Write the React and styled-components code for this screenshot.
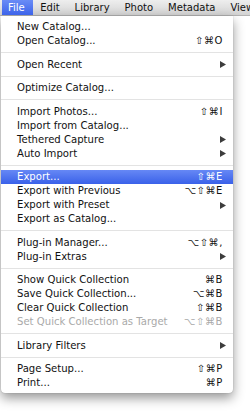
import React from "react";
import styled, { createGlobalStyle } from "styled-components";

const GlobalStyle = createGlobalStyle`
  html, body {
    margin: 0;
    padding: 0;
    background: #ffffff;
  }
  body {
    font-family: "DejaVu Sans", "Noto Sans", sans-serif;
    -webkit-font-smoothing: antialiased;
  }
`;

const Screen = styled.div`
  width: 250px;
  height: 417px;
  overflow: hidden;
  background: #ffffff;
  position: relative;
`;

const MenuBar = styled.div`
  display: flex;
  align-items: stretch;
  height: 16px;
  padding-left: 2px;
  box-sizing: border-box;
  background: linear-gradient(#eeeeee, #d3d3d3);
  border-bottom: 1px solid #b4b4b4;
  white-space: nowrap;
`;

const MenuTitle = styled.div`
  display: flex;
  align-items: center;
  padding: 0 ${(p) => (p.$first ? "7px 0 6px" : "7.5px")};
  font-size: 10px;
  color: ${(p) => (p.$active ? "#ffffff" : "#111111")};
  background: ${(p) =>
    p.$active ? "linear-gradient(#6a8cf6, #3d64ea)" : "transparent"};
  padding-left: ${(p) => (p.$first ? "6px" : "7.5px")};
  padding-right: ${(p) => (p.$first ? "8px" : "7.5px")};
`;

const Dropdown = styled.div`
  margin-left: 1px;
  width: 232px;
  padding: 4px 0 3px;
  box-sizing: border-box;
  background: #ffffff;
  box-shadow: 0 5px 12px rgba(0, 0, 0, 0.42), 0 0 1px rgba(0, 0, 0, 0.35);
  border-radius: 0 0 4px 4px;
`;

const Item = styled.div`
  display: flex;
  align-items: center;
  justify-content: space-between;
  height: 14px;
  padding: 0 10px 0 16px;
  font-size: 10.1px;
  line-height: 14px;
  white-space: nowrap;
  color: ${(p) => (p.$active ? "#ffffff" : p.$disabled ? "#a9a9a9" : "#111111")};
  background: ${(p) =>
    p.$active ? "linear-gradient(#6688f5, #3a61e9)" : "transparent"};
`;

const Shortcut = styled.span`
  letter-spacing: 0.6px;
  font-size: 10px;
`;

const Arrow = styled.svg`
  width: 6px;
  height: 7px;
  margin-right: -3px;
  fill: ${(p) => (p.$active ? "#ffffff" : "#3c3c3c")};
`;

const Separator = styled.div`
  height: 1px;
  margin: 4px 0 4.5px;
  background: #e3e3e3;
`;

const menuTitles = ["File", "Edit", "Library", "Photo", "Metadata", "View"];

const items = [
  { label: "New Catalog..." },
  { label: "Open Catalog...", sc: "⇧⌘O" },
  "sep",
  { label: "Open Recent", sub: true },
  "sep",
  { label: "Optimize Catalog..." },
  "sep",
  { label: "Import Photos...", sc: "⇧⌘I" },
  { label: "Import from Catalog..." },
  { label: "Tethered Capture", sub: true },
  { label: "Auto Import", sub: true },
  "sep",
  { label: "Export...", sc: "⇧⌘E", active: true },
  { label: "Export with Previous", sc: "⌥⇧⌘E" },
  { label: "Export with Preset", sub: true },
  { label: "Export as Catalog..." },
  "sep",
  { label: "Plug-in Manager...", sc: "⌥⇧⌘," },
  { label: "Plug-in Extras", sub: true },
  "sep",
  { label: "Show Quick Collection", sc: "⌘B" },
  { label: "Save Quick Collection...", sc: "⌥⌘B" },
  { label: "Clear Quick Collection", sc: "⇧⌘B" },
  { label: "Set Quick Collection as Target", sc: "⌥⇧⌘B", disabled: true },
  "sep",
  { label: "Library Filters", sub: true },
  "sep",
  { label: "Page Setup...", sc: "⇧⌘P" },
  { label: "Print...", sc: "⌘P" },
];

export default function App() {
  return (
    <Screen>
      <GlobalStyle />
      <MenuBar>
        {menuTitles.map((t, i) => (
          <MenuTitle key={t} $active={i === 0} $first={i === 0}>
            {t}
          </MenuTitle>
        ))}
      </MenuBar>
      <Dropdown>
        {items.map((it, i) =>
          it === "sep" ? (
            <Separator key={i} />
          ) : (
            <Item key={i} $active={it.active} $disabled={it.disabled}>
              <span>{it.label}</span>
              {it.sc && <Shortcut>{it.sc}</Shortcut>}
              {it.sub && (
                <Arrow viewBox="0 0 6 7" $active={it.active}>
                  <polygon points="0,0 6,3.5 0,7" />
                </Arrow>
              )}
            </Item>
          )
        )}
      </Dropdown>
    </Screen>
  );
}
